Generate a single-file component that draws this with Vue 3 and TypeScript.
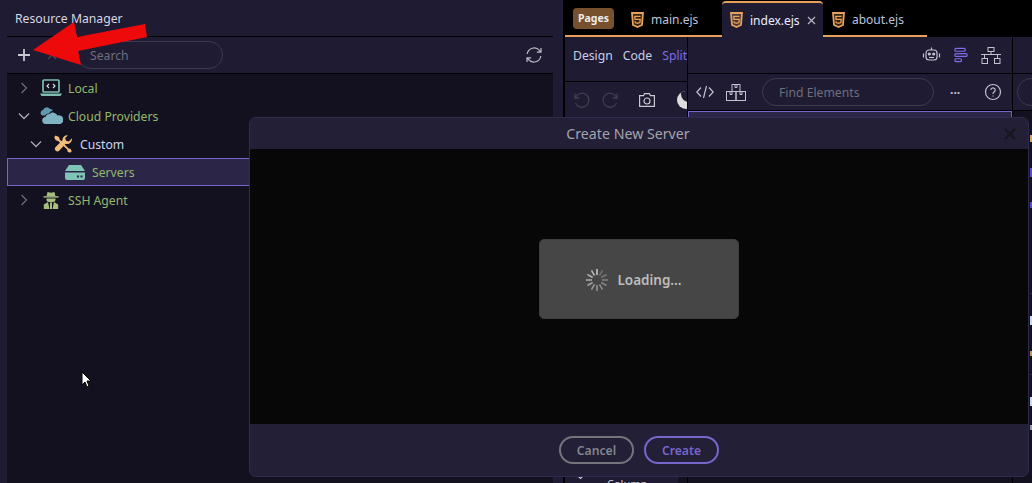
<template>
  <div class="page">
    <!-- left: resource manager -->
    <div class="rail"></div>
    <section class="resources">
      <header class="res-title">Resource Manager</header>
      <div class="res-tools">
        <svg class="plus" width="14" height="14" viewBox="0 0 14 14"><path d="M7 1v12M1 7h12" stroke="#c9c8d2" stroke-width="1.8" fill="none" /></svg>
        <svg class="res-x" width="10" height="10" viewBox="0 0 10 10"><path d="M1 1l8 8M9 1L1 9" stroke="#4a4958" stroke-width="1.2" /></svg>
        <div class="res-search">Search</div>
        <svg class="refresh" width="18" height="18" viewBox="0 0 18 18" fill="none" stroke="#bdbcc8" stroke-width="1.2">
          <path d="M2.2 8A7 7 0 0 1 14.6 4.6L16 6.2M16 2v4.2h-4.2" />
          <path d="M15.8 10A7 7 0 0 1 3.4 13.4L2 11.8M2 16v-4.2h4.2" />
        </svg>
      </div>
      <ul class="tree">
        <li v-for="row in treeRows" :key="row.label" class="tree-row" :class="{ selected: row.selected }" :style="{ paddingLeft: row.indent + 'px' }">
          <svg v-if="row.arrow" class="chev" width="12" height="12" viewBox="0 0 12 12" fill="none" :stroke="row.arrow === 'right' ? '#6d6c78' : '#a9a8b4'" stroke-width="1.3">
            <path v-if="row.arrow === 'right'" d="M3.5 1l5 5-5 5" />
            <path v-else d="M1 3.5l5 5 5-5" />
          </svg>
          <span v-else class="chev-space"></span>
          <span class="tree-icon">
            <svg v-if="row.icon === 'laptop'" width="22" height="18" viewBox="0 0 22 18">
              <rect x="3" y="1" width="16" height="12" rx="1" fill="none" stroke="#7dbdb0" stroke-width="1.7" />
              <path d="M9 5L7 7l2 2M13 5l2 2-2 2" fill="none" stroke="#d5e6e2" stroke-width="1.1" />
              <path d="M0 14.5h22l-1.5 2.5h-19z" fill="#7dbdb0" />
            </svg>
            <svg v-else-if="row.icon === 'cloud'" width="23" height="18" viewBox="0 0 23 18">
              <path d="M2 8.5a3 3 0 0 1 1-5.5 4 4 0 0 1 7-1 3 3 0 0 1 3 1.500a6 6 0 0 0-4 3 4 4 0 0 0-4 2z" fill="#5f99ad" />
              <path d="M6 17a3.500 3.500 0 0 1-.5-7 4 4 0 0 1 4-3 5 5 0 0 1 8 1.500 3.500 3.500 0 0 1 3 8.500z" fill="#7fb3c4" />
            </svg>
            <svg v-else-if="row.icon === 'tools'" width="18" height="18" viewBox="0 0 18 18">
              <path d="M1.500.6L5 2l.6 2.500 9 9 2 .4 1.200 2.300-1.900 1.600-2.200-1.100-.5-2.100L4.200 5.900 1.700 5.200.2 2.200z" fill="#f2bc7c" />
              <path d="M17.800 3.300a4.800 4.800 0 0 1-6.200 5.500L5.200 15.700a2.600 2.600 0 0 1-3.800-3.500l7-7A4.800 4.800 0 0 1 13.800.4L11.200 3l.8 2.800 2.900.8z" fill="#f2bc7c" />
            </svg>
            <svg v-else-if="row.icon === 'server'" width="22" height="15" viewBox="0 0 22 15" fill="#7fc4b5">
              <path d="M5 0h12l4 6H1z" />
              <path d="M1 7.500h20V13a2 2 0 0 1-2 2H3a2 2 0 0 1-2-2z" />
              <rect x="13" y="10.500" width="2" height="2" fill="#2b2547" />
              <rect x="16.500" y="10.500" width="2" height="2" fill="#2b2547" />
            </svg>
            <svg v-else width="16" height="18" viewBox="0 0 16 18" fill="#a6bf7f">
              <path d="M4.500 1L8 1.800 11.500 1l1 4.200h-9z" />
              <rect x="0.500" y="5.200" width="15" height="1.400" />
              <path d="M3.500 7.400h9v1.300a4.500 2.500 0 0 1-9 0z" />
              <path d="M.8 18v-4.500l4.200-2.500 1.500 7zM15.200 18v-4.500L11 11l-1.500 7z" />
              <path d="M7 11.500h2V18H7z" />
            </svg>
          </span>
          <span class="tree-label" :class="{ light: row.light }">{{ row.label }}</span>
        </li>
      </ul>
    </section>
    <div class="gutter"></div>

    <!-- right: editor -->
    <section class="editor">
      <div class="tabs">
        <span class="pages">Pages</span>
        <div v-for="tab in tabs" :key="tab.name" class="tab" :class="{ active: tab.active }">
          <svg width="13" height="16" viewBox="0 0 13 16">
            <path d="M1 1h11l-1 12-4.500 2L2 13z" fill="#e8a15a" fill-opacity="0.22" stroke="#e8a15a" stroke-width="1.800" />
            <path d="M9.500 4.300H3.800l.2 3h5.200l-.3 3.300-2.400.8-2.300-.8-.1-1.300" fill="none" stroke="#e8a15a" stroke-width="1.300" />
          </svg>
          <span class="tab-name">{{ tab.name }}</span>
          <svg v-if="tab.active" class="tab-x" width="9" height="9" viewBox="0 0 9 9"><path d="M1 1l7 7M8 1L1 8" stroke="#b9b8c4" stroke-width="1.200" /></svg>
        </div>
      </div>
      <div class="tab-line"></div>
      <div class="workspace">
        <div class="modes-col">
          <div class="modes">
            <span>Design</span><span>Code</span><span class="on">Split</span>
          </div>
          <div class="actions">
            <svg width="16" height="16" viewBox="0 0 16 16" fill="none" stroke="#3f3e4c" stroke-width="1.300"><path d="M1 1.500v4.500h4.500M1.300 6a7 7 0 1 1 .2 5" /></svg>
            <svg width="16" height="16" viewBox="0 0 16 16" fill="none" stroke="#3f3e4c" stroke-width="1.300"><path d="M15 1.500v4.500h-4.500M14.700 6a7 7 0 1 0-.2 5" /></svg>
            <svg class="camera" width="16" height="14" viewBox="0 0 16 14" fill="none" stroke="#c9c8d2" stroke-width="1.200"><path d="M.6 2.600h4l1-2h4.800l1 2h4v10.800H.6z" /><circle cx="8" cy="8" r="3" /></svg>
            <span class="moon"></span>
          </div>
          <div class="layers"><div class="layers-inner">
            <svg width="7" height="5" viewBox="0 0 7 5"><path d="M1 1l2.500 2.500L6 1" fill="none" stroke="#c9c8d2" stroke-width="1.200" /></svg>
            <span class="column-label">Column</span>
          </div></div>
        </div>
        <div class="elements">
          <div class="el-top">
            <svg width="19" height="18" viewBox="0 0 18 18" fill="none" stroke="#c2c1cd" stroke-width="1.200">
              <rect x="3.500" y="4" width="11" height="10" rx="3" /><path d="M9 4V1.500M1 7.500v4M17 7.500v4" /><circle cx="6.800" cy="8" r="1" fill="#c2c1cd" /><circle cx="11.200" cy="8" r="1" fill="#c2c1cd" /><path d="M6.500 11.500h5" />
            </svg>
            <svg width="14" height="16" viewBox="0 0 15 16" fill="none" stroke="#7f6be8" stroke-width="1.300">
              <rect x="1" y="1" width="11" height="3" rx="1" /><rect x="1" y="6.500" width="13" height="3" rx="1" /><rect x="1" y="12" width="7" height="3" rx="1" />
            </svg>
            <svg width="20" height="17" viewBox="0 0 20 17" fill="none" stroke="#c2c1cd" stroke-width="1">
              <rect x="7" y="0.500" width="6" height="4" /><path d="M10 4.500v3M0 7.500h20M3.500 7.500v4M16.500 7.500v4" /><rect x="1" y="11.500" width="5.500" height="5" /><rect x="13.500" y="11.500" width="5.500" height="5" />
            </svg>
          </div>
          <div class="el-bottom">
            <svg width="18" height="14" viewBox="0 0 18 14" fill="none" stroke="#c2c1cd" stroke-width="1.200"><path d="M5 2.500L.8 7 5 11.500M13 2.500L17.200 7 13 11.500M10.500 1l-3 12" /></svg>
            <svg class="boxes" width="20" height="17" viewBox="0 0 20 17" fill="none" stroke="#c2c1cd" stroke-width="1"><rect x="6" y="0.500" width="8" height="7" /><rect x="0.500" y="7.500" width="9.500" height="9" /><rect x="10" y="7.500" width="9.500" height="9" /><path d="M9 .5v3h2v-3M4 7.500v3h2v-3M14 7.500v3h2v-3" /></svg>
            <div class="find">Find Elements</div>
            <span class="dots">···</span>
            <svg width="18" height="18" viewBox="0 0 18 18" fill="none" stroke="#c2c1cd" stroke-width="1.200"><circle cx="9" cy="9" r="7.500" /><path d="M6.800 7a2.200 2.200 0 1 1 3.300 2C9.300 9.500 9 10 9 11M9 12.400v1.200" /></svg>
          </div>
          <div class="el-selected"></div>
        </div>
        <div class="far-panel">
          <div class="far-top"></div>
          <div class="far-bottom"><div class="far-pill"></div></div>
          <div class="far-body">
            <i v-for="bit in farBits" :key="bit.top + bit.color" class="far-bit" :style="{ marginTop: bit.top + 'px', background: bit.color, height: bit.h + 'px' }"></i>
          </div>
        </div>
      </div>
    </section>

    <!-- dialog overlay -->
    <div class="dialog">
      <div class="dlg-head">
        <span>Create New Server</span>
        <svg class="dlg-x" width="12" height="12" viewBox="0 0 12 12"><path d="M1 1l10 10M11 1L1 11" stroke="#17161f" stroke-width="2.200" /></svg>
      </div>
      <div class="dlg-body">
        <div class="loading">
          <svg width="24" height="24" viewBox="0 0 24 24">
            <rect v-for="(o, i) in spinner" :key="i" x="11.200" y="1" width="1.600" height="6" :fill="'rgba(210,210,210,' + o + ')'" :transform="'rotate(' + i * 30 + ' 12 12)'" />
          </svg>
          <span>Loading...</span>
        </div>
      </div>
      <div class="dlg-foot">
        <button class="btn cancel">Cancel</button>
        <button class="btn create">Create</button>
      </div>
    </div>

    <!-- annotation arrow + mouse pointer -->
    <svg class="arrow" width="118" height="47" viewBox="0 0 118 47"><path d="M2 30L43 2l3 15 68-13 2 13-69 14 3 14z" fill="#ee0a0a" /></svg>
    <svg class="pointer" width="12" height="18" viewBox="0 0 12 18"><path d="M1 1v13l3-3 2 5 2-1-2-5h4z" fill="#fff" stroke="#000" stroke-width="1" /></svg>
  </div>
</template>

<script setup lang="ts">
interface TreeRow {
  label: string;
  indent: number;
  arrow?: 'right' | 'down';
  icon: string;
  light?: boolean;
  selected?: boolean;
}

const treeRows: TreeRow[] = [
  { label: 'Local', indent: 11, arrow: 'right', icon: 'laptop' },
  { label: 'Cloud Providers', indent: 11, arrow: 'down', icon: 'cloud' },
  { label: 'Custom', indent: 23, arrow: 'down', icon: 'tools', light: true },
  { label: 'Servers', indent: 34, icon: 'server', selected: true },
  { label: 'SSH Agent', indent: 11, arrow: 'right', icon: 'agent' },
];

const tabs = [
  { name: 'main.ejs', active: false },
  { name: 'index.ejs', active: true },
  { name: 'about.ejs', active: false },
];

// 转圈的透明度
const spinner = [0.9, 0.3, 0.35, 0.4, 0.45, 0.5, 0.55, 0.6, 0.65, 0.7, 0.75, 0.8];

// 弹窗右侧露出的一点内容
const farBits = [
  { top: 24, h: 7, color: '#d9a46a' },
  { top: 26, h: 9, color: '#5a4bd0' },
  { top: 25, h: 6, color: '#5a4bd0' },
  { top: 85, h: 1, color: '#2d2b3d' },
  { top: 22, h: 9, color: '#c9dbe6' },
  { top: 26, h: 5, color: '#b89a70' },
  { top: 18, h: 1, color: '#2d2b3e' },
  { top: 22, h: 9, color: '#c9dbe7' },
  { top: 19, h: 5, color: '#9a99a6' },
];
</script>

<style>
html, body {
  margin: 0;
  background: #000;
  overflow: hidden;
}
</style>

<style scoped>
.page {
  position: relative;
  display: flex;
  width: 1032px;
  height: 483px;
  overflow: hidden;
  font-family: "Noto Sans", "Open Sans", sans-serif;
  font-size: 12.2px;
  color: #d8d8e2;
  background: #000;
}
.rail {
  width: 7px;
  background: #1e1b33;
  flex: none;
}
.resources {
  width: 546px;
  flex: none;
  display: flex;
  flex-direction: column;
  background: #13111f;
}
.res-title {
  height: 36px;
  padding-left: 8px;
  line-height: 37px;
  background: #1e1b33;
  border-bottom: 1px solid #000;
}
.res-tools {
  height: 36px;
  display: flex;
  align-items: center;
  background: #1e1b33;
  border-bottom: 1px solid #000;
  padding: 0 10px;
}
.plus {
  flex: none;
}
.res-x {
  flex: none;
  margin-left: 16px;
  margin-right: 20px;
}
.res-search {
  width: 146px;
  height: 28px;
  padding-left: 12px;
  box-sizing: border-box;
  border: 1px solid #3c3a4f;
  border-radius: 14px;
  line-height: 27px;
  color: #6f6e7c;
}
.refresh {
  margin-left: auto;
}
.tree {
  list-style: none;
  margin: 0;
  padding: 0;
}
.tree-row {
  display: flex;
  align-items: center;
  height: 28px;
  box-sizing: border-box;
}
.tree-row.selected {
  background: #2b2547;
  border-top: 1px solid #7766cc;
  border-bottom: 1px solid #7766cc;
  border-left: 1px solid #7766cc;
}
.chev, .chev-space {
  width: 12px;
  flex: none;
}
.tree-icon {
  display: flex;
  justify-content: center;
  width: 24px;
  margin-left: 9px;
  margin-right: 5px;
}
.tree-label {
  color: #93b86e;
}
.tree-label.light {
  color: #c9d6f2;
}
.gutter {
  width: 11px;
  flex: none;
  background: #1e1b33;
  border-right: 1px solid #000;
  box-sizing: border-box;
}
.editor {
  flex: 1;
  min-width: 0;
  background: #000;
}
.tabs {
  height: 36px;
  display: flex;
  align-items: center;
}
.pages {
  width: 41px;
  height: 21px;
  margin-left: 9px;
  margin-right: 17px;
  background: #77512d;
  border-radius: 4px;
  font-size: 10.500px;
  font-weight: 700;
  line-height: 21px;
  text-align: center;
  color: #eee;
}
.tab {
  display: flex;
  align-items: center;
  gap: 7px;
  height: 36px;
  width: 91px;
  padding-top: 3px;
  box-sizing: border-box;
  font-size: 12px;
  color: #b9c4dc;
}
.tab.active {
  position: relative;
  z-index: 1;
  width: 101px;
  height: 36px;
  margin-top: 2px;
  margin-right: 9px;
  padding-left: 8px;
  padding-top: 0;
  background: #1e1b33;
  border-top: 2px solid #e8a15a;
  border-radius: 4px 4px 0 0;
  color: #eaf0ff;
}
.tab-line {
  width: 362px;
  height: 2px;
  margin-left: 1px;
  background: #e8a15a;
  margin-top: -1px;
}
.workspace {
  display: flex;
  height: 446px;
  margin-left: 1px;
}
.modes-col {
  width: 122px;
  flex: none;
  display: flex;
  flex-direction: column;
  background: #1e1b33;
  overflow: hidden;
}
.modes {
  height: 45px;
  flex: none;
  display: flex;
  gap: 10px;
  padding: 10px 0 0 8px;
  box-sizing: border-box;
  border-bottom: 1px solid #000;
  white-space: nowrap;
  color: #c9d0e6;
}
.modes .on {
  color: #7f6be8;
}
.actions {
  flex: none;
  height: 36px;
  display: flex;
  align-items: center;
  gap: 12px;
  padding-left: 9px;
}
.actions svg {
  flex: none;
}
.camera {
  margin-left: 9px;
}
.moon {
  position: relative;
  width: 18px;
  height: 18px;
  margin-left: 10px;
  border-radius: 50%;
  background: #dcdcdc;
  flex: none;
  overflow: hidden;
}
.moon::before {
  content: "";
  position: absolute;
  left: 4px;
  top: -5px;
  width: 16px;
  height: 16px;
  border-radius: 50%;
  background: #1e1b33;
}
.layers {
  flex: 1;
  display: flex;
  flex-direction: column;
  justify-content: flex-end;
  padding-right: 9px;
  background: #13111f;
}
.layers-inner {
  height: 8px;
  padding-left: 12px;
  background: #1e1b33;
  overflow: hidden;
}
.layers-inner svg {
  vertical-align: top;
}
.column-label {
  display: inline-block;
  margin-left: 23px;
  margin-top: 2px;
  font-size: 11px;
  line-height: 14px;
  color: #c9c8d2;
}
.elements {
  width: 326px;
  flex: none;
  background: #13111f;
  border-left: 1px solid #000;
  border-right: 1px solid #000;
  box-sizing: border-box;
}
.el-top {
  height: 36px;
  display: flex;
  align-items: center;
  justify-content: flex-end;
  gap: 13px;
  padding-right: 11px;
  background: #1e1b33;
  border-bottom: 1px solid #000;
}
.el-bottom {
  height: 36px;
  display: flex;
  align-items: center;
  padding-left: 8px;
  background: #1e1b33;
  border-bottom: 1px solid #000;
}
.boxes {
  margin-left: 12px;
}
.find {
  width: 172px;
  height: 28px;
  margin-left: 16px;
  padding-left: 16px;
  box-sizing: border-box;
  border: 1px solid #3c3a4f;
  border-radius: 14px;
  line-height: 27px;
  color: #6f6e7c;
}
.dots {
  margin-left: 16px;
  margin-right: 24px;
  font-weight: 700;
  color: #c2c1cd;
}
.el-selected {
  height: 8px;
  background: #2b2547;
  border: 1px solid #7766cc;
}
.far-panel {
  flex: 1;
  background: #13111f;
}
.far-top {
  height: 36px;
  background: #1e1b33;
  border-bottom: 1px solid #000;
}
.far-bottom {
  height: 36px;
  display: flex;
  align-items: center;
  padding-left: 4px;
  background: #1e1b33;
  border-bottom: 1px solid #000;
  overflow: hidden;
}
.far-pill {
  width: 60px;
  height: 28px;
  flex: none;
  border: 1px solid #3c3a4f;
  border-radius: 14px;
  box-sizing: border-box;
}
.far-body {
  display: flex;
  flex-direction: column;
  padding-left: 17px;
}
.far-bit {
  display: block;
}
.dialog {
  position: absolute;
  left: 249px;
  top: 117px;
  width: 780px;
  height: 360px;
  display: flex;
  flex-direction: column;
  border-radius: 7px;
  overflow: hidden;
  background: #221f36;
  border: 1px solid #2f2b4e;
  box-sizing: border-box;
}
.dlg-head {
  position: relative;
  height: 31px;
  flex: none;
  padding-right: 22px;
  text-align: center;
  line-height: 32px;
  font-size: 14.200px;
  color: #a4a4ad;
}
.dlg-x {
  position: absolute;
  right: 12px;
  top: 10px;
}
.dlg-body {
  flex: 1;
  display: flex;
  align-items: center;
  justify-content: center;
  background: #070707;
}
.loading {
  width: 200px;
  height: 80px;
  margin-bottom: 15px;
  padding: 2px 11px 0 0;
  display: flex;
  align-items: center;
  justify-content: center;
  gap: 8px;
  box-sizing: border-box;
  background: #464646;
  border: 1px solid #3e3e3e;
  border-radius: 5px;
  font-size: 13.500px;
  font-weight: 600;
  color: #bdbdbd;
}
.dlg-foot {
  height: 52px;
  flex: none;
  display: flex;
  align-items: center;
  justify-content: center;
  gap: 10px;
}
.btn {
  width: 75px;
  height: 28px;
  background: transparent;
  border-radius: 14px;
  border: 2px solid;
  font-family: inherit;
  font-size: 12.2px;
  font-weight: 600;
  padding: 0;
}
.btn.cancel {
  border-color: #74747c;
  color: #85858d;
}
.btn.create {
  border-color: #7766cc;
  color: #7766cc;
}
.arrow {
  position: absolute;
  left: 31px;
  top: 20px;
}
.pointer {
  position: absolute;
  left: 81px;
  top: 371px;
}
</style>
